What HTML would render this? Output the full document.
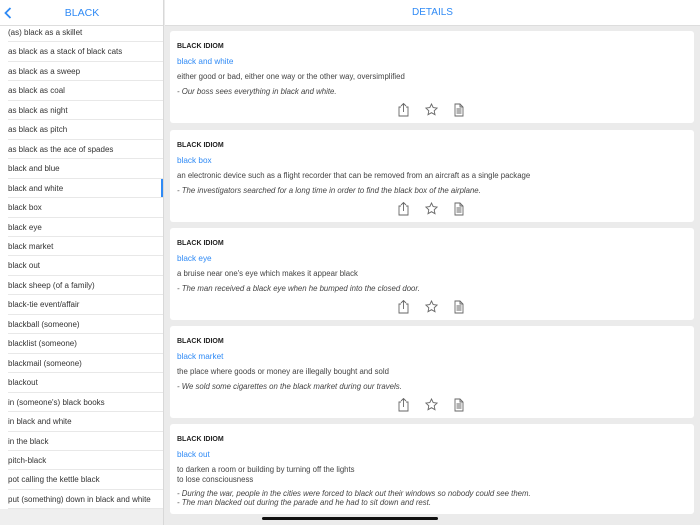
<!DOCTYPE html><html><head><style>
*{margin:0;padding:0;box-sizing:border-box}
body{width:700px;height:525px;overflow:hidden;background:#ebebeb;font-family:"Liberation Sans",sans-serif;position:relative;color:#333}
#left{position:absolute;left:0;top:0;width:164px;height:525px;background:#efefef;border-right:1px solid #d8d8d8;overflow:hidden}
#lh{position:absolute;top:0;left:0;width:164px;height:26px;background:#fff;border-bottom:1px solid #ddd;z-index:2}
#lh span{position:absolute;left:0;width:164px;top:7px;text-align:center;color:#2f8af5;font-size:10.5px}
#list{position:absolute;top:23px;left:0;width:164px;background:#fff}
.r{height:19.46px;line-height:19px;font-size:8px;padding-left:8px;color:#333;position:relative}
.r:after{content:"";position:absolute;left:8px;right:0;bottom:0;border-bottom:1px solid #e8e8e8}
.sel:before{content:"";position:absolute;right:0;top:0;width:3px;height:19px;background:#2f8af5}
#rh{position:absolute;left:165px;top:0;width:535px;height:26px;background:#fff;border-bottom:1px solid #ddd}
#rh span{position:absolute;left:0;width:535px;top:7px;text-align:center;color:#2f8af5;font-size:10px}
.c{position:absolute;left:170px;width:524px;height:92px;background:#fff;border-radius:3px;padding-left:7px}
.t{position:absolute;top:12px;left:7px;font-size:7px;font-weight:bold;color:#222}
.n{position:absolute;top:26px;left:7px;font-size:8.2px;color:#2f8af5}
.d{position:absolute;top:41px;left:7px;font-size:7.8px;color:#444;line-height:9.5px}
.e{position:absolute;top:56px;left:7px;font-size:7.8px;color:#444;font-style:italic;line-height:9px}
.ic{position:absolute;top:72px;left:227px}
</style></head><body>
<div id="left"><div id="lh"><svg style="position:absolute;left:4px;top:7px" width="8" height="12"><path d="M6.5 1L1.5 6l5 5" stroke="#2f8af5" stroke-width="1.8" fill="none"/></svg><span>BLACK</span></div>
<div id="list">
<div class="r">(as) black as a skillet</div><div class="r">as black as a stack of black cats</div><div class="r">as black as a sweep</div><div class="r">as black as coal</div><div class="r">as black as night</div><div class="r">as black as pitch</div><div class="r">as black as the ace of spades</div><div class="r">black and blue</div><div class="r sel">black and white</div><div class="r">black box</div><div class="r">black eye</div><div class="r">black market</div><div class="r">black out</div><div class="r">black sheep (of a family)</div><div class="r">black-tie event/affair</div><div class="r">blackball (someone)</div><div class="r">blacklist (someone)</div><div class="r">blackmail (someone)</div><div class="r">blackout</div><div class="r">in (someone's) black books</div><div class="r">in black and white</div><div class="r">in the black</div><div class="r">pitch-black</div><div class="r">pot calling the kettle black</div><div class="r">put (something) down in black and white</div>
</div></div>
<div id="rh"><span>DETAILS</span></div>
<svg width="0" height="0" style="position:absolute"><defs><g id="icons" fill="none" stroke="#666" stroke-width="0.9"><path d="M4 4H2v9h9V4H9M6.5 9V0.5M4 3l2.5-2.5L9 3"/><path d="M34.5 1l1.7 3.6 3.9.5-2.9 2.7.8 3.9-3.5-2-3.5 2 .8-3.9-2.9-2.7 3.9-.5z"/><path d="M58 1h5l3 3v9h-8zM63 1v3h3M59.5 6h5M59.5 8h5M59.5 10h5"/></g></defs></svg>
<div class="c" style="top:31px"><div class="t">BLACK IDIOM</div><div class="n">black and white</div><div class="d">either good or bad, either one way or the other way, oversimplified</div><div class="e">- Our boss sees everything in black and white.</div><svg class="ic" width="70" height="14"><use href="#icons"/></svg></div>
<div class="c" style="top:130px"><div class="t">BLACK IDIOM</div><div class="n">black box</div><div class="d">an electronic device such as a flight recorder that can be removed from an aircraft as a single package</div><div class="e">- The investigators searched for a long time in order to find the black box of the airplane.</div><svg class="ic" width="70" height="14"><use href="#icons"/></svg></div>
<div class="c" style="top:228px"><div class="t">BLACK IDIOM</div><div class="n">black eye</div><div class="d">a bruise near one's eye which makes it appear black</div><div class="e">- The man received a black eye when he bumped into the closed door.</div><svg class="ic" width="70" height="14"><use href="#icons"/></svg></div>
<div class="c" style="top:326px"><div class="t">BLACK IDIOM</div><div class="n">black market</div><div class="d">the place where goods or money are illegally bought and sold</div><div class="e">- We sold some cigarettes on the black market during our travels.</div><svg class="ic" width="70" height="14"><use href="#icons"/></svg></div>
<div class="c" style="top:424px;height:90px"><div class="t">BLACK IDIOM</div><div class="n">black out</div><div class="d">to darken a room or building by turning off the lights<br>to lose consciousness</div><div class="e" style="top:65px">- During the war, people in the cities were forced to black out their windows so nobody could see them.<br>- The man blacked out during the parade and he had to sit down and rest.</div></div>
<div style="position:absolute;left:262px;top:517px;width:176px;height:3px;border-radius:2px;background:#111"></div>
</body></html>
